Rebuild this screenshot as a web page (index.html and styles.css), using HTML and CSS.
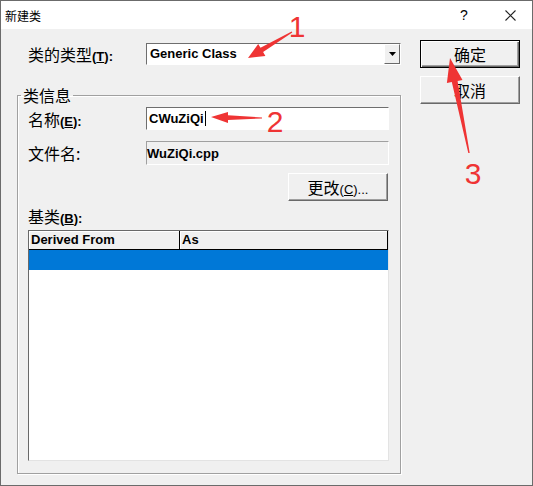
FILE: index.html
```html
<!DOCTYPE html>
<html lang="zh-CN">
<head>
    <meta charset="UTF-8">
    <meta name="viewport" content="width=device-width, initial-scale=1.0">
    <title>新建类</title>
    <link rel="stylesheet" href="styles.css">
</head>
<body>
    <div class="window">
        <div class="titlebar">
            <span class="title">新建类</span>
            <span class="help">?</span>
            <span class="close">
                <svg width="11" height="11" viewBox="0 0 11 11"><path d="M0.5 0.5 L10.5 10.5 M10.5 0.5 L0.5 10.5" stroke="#222" stroke-width="1.1" fill="none"/></svg>
            </span>
        </div>

        <div class="client">
            <div class="main">
                <div class="type-row">
                    <label class="lbl">类的类型<span class="key">(<u>T</u>):</span></label>
                    <div class="combo">
                        <span class="combo-text">Generic Class</span>
                        <span class="combo-btn">
                            <svg width="7" height="4" viewBox="0 0 7 4"><path d="M0 0 H7 L3.5 4 Z" fill="#000"/></svg>
                        </span>
                    </div>
                </div>

                <fieldset class="group">
                    <legend>类信息</legend>

                    <div class="field-row">
                        <label class="lbl">名称<span class="key">(<u>E</u>):</span></label>
                        <div class="edit">CWuZiQi<span class="caret"></span></div>
                    </div>

                    <div class="field-row file-row">
                        <span class="lbl">文件名:</span>
                        <div class="edit readonly">WuZiQi.cpp</div>
                    </div>

                    <div class="change-row">
                        <button class="btn change-btn">更改<span class="key-plain">(<u>C</u>)...</span></button>
                    </div>

                    <div class="base-label">基类<span class="key">(<u>B</u>):</span></div>

                    <div class="list">
                        <div class="list-head">
                            <div class="col col-from">Derived From</div>
                            <div class="col col-as">As</div>
                        </div>
                        <div class="list-row selected"></div>
                    </div>
                </fieldset>
            </div>

            <div class="side">
                <button class="btn default">确定</button>
                <button class="btn">取消</button>
            </div>
        </div>

        <!-- red annotations drawn over the dialog -->
        <svg class="marks" width="533" height="486" viewBox="0 0 533 486">
            <polygon points="248,58 265.4,55.9 263.1,52.1 292.3,32.4 291.7,31.6 260.5,47.7 258.2,43.9"/>
            <polygon points="211,117 228,112 228,115.3 262,117.5 262,118.5 228,120 228,123"/>
            <polygon points="450,58 462.5,79.9 457.6,80.9 469.7,152.9 468.3,153.1 451.8,82.1 446.9,83.1"/>
            <text x="297" y="37">1</text>
            <text x="275" y="132">2</text>
            <text x="473" y="184">3</text>
        </svg>
    </div>
</body>
</html>
```

FILE: styles.css
```css
body {
    margin: 0;
    background-color: #f0f0f0;
    font-family: "Noto Sans CJK SC", "Liberation Sans", sans-serif;
    color: #000;
}

.window {
    position: relative;
    width: 533px;
    height: 486px;
    box-sizing: border-box;
    border: 1px solid #6b6b6b;
    background-color: #f0f0f0;
}

.titlebar {
    display: flex;
    align-items: center;
    height: 28px;
    background-color: #fff;
    padding-left: 4px;
}

.title {
    font-size: 12px;
    flex: 1;
}

.help {
    font-family: "Liberation Sans", sans-serif;
    font-size: 14px;
    width: 14px;
    text-align: center;
    margin-right: 34px;
}

.close {
    display: flex;
    width: 11px;
    height: 11px;
    margin-right: 16px;
}

.client {
    display: flex;
    padding-left: 16px;
}

.main {
    width: 384px;
}

.side {
    display: flex;
    flex-direction: column;
    margin-left: 19px;
    padding-top: 11px;
}

/* labels */
.lbl {
    width: 118px;
    font-size: 16px;
    line-height: 20px;
    flex-shrink: 0;
}

.key {
    font-family: "Liberation Sans", sans-serif;
    font-size: 13px;
    font-weight: bold;
    line-height: 1;
}

.key-plain {
    font-family: "Liberation Sans", sans-serif;
    font-size: 13px;
    line-height: 1;
}

.type-row {
    display: flex;
    align-items: center;
    margin-top: 14px;
    height: 22px;
}

.type-row .lbl {
    margin-left: 11px;
}

.combo {
    display: flex;
    width: 255px;
    height: 22px;
    box-sizing: border-box;
    border: 1px solid;
    border-color: #6e6e6e #fff #fff #6e6e6e;
    background-color: #fff;
}

.combo-text {
    flex: 1;
    padding-left: 3px;
    font-family: "Liberation Sans", sans-serif;
    font-size: 13px;
    font-weight: bold;
    line-height: 20px;
}

.combo-btn {
    display: flex;
    align-items: center;
    justify-content: center;
    width: 16px;
    box-sizing: border-box;
    border: 1px solid;
    border-color: #fff #696969 #696969 #fff;
    background-color: #f0f0f0;
}

/* group box */
.group {
    margin: 20px 0 0 0;
    padding: 2px 11px 12px 10px;
    border: 1px solid #a0a0a0;
    box-shadow: 1px 1px 0 #fff, inset 1px 1px 0 #fff;
    min-width: 0;
}

.group legend {
    font-size: 16px;
    line-height: 20px;
    padding: 0 2px;
    margin-left: -7px;
}

.field-row {
    display: flex;
    align-items: center;
}

.edit {
    display: flex;
    align-items: center;
    width: 244px;
    height: 23px;
    box-sizing: border-box;
    border: 1px solid;
    border-color: #6e6e6e #fff #fff #6e6e6e;
    background-color: #fff;
    padding-left: 2px;
    font-family: "Liberation Sans", sans-serif;
    font-size: 13px;
    font-weight: bold;
}

.caret {
    display: inline-block;
    width: 1px;
    height: 15px;
    margin-left: 1px;
    background-color: #000;
}

.file-row {
    margin-top: 11px;
}

.edit.readonly {
    height: 24px;
    padding-left: 0;
    background-color: #f0f0f0;
    border-color: #a0a0a0 #fff #fff #a0a0a0;
}

.change-row {
    display: flex;
    justify-content: flex-end;
    margin-top: 8px;
    padding-right: 1px;
}

/* buttons */
.btn {
    width: 100px;
    height: 28px;
    box-sizing: border-box;
    border: 1px solid;
    border-color: #fff #696969 #696969 #fff;
    box-shadow: inset -1px -1px 0 #a0a0a0;
    background-color: #f0f0f0;
    font-family: "Noto Sans CJK SC", sans-serif;
    font-size: 16px;
    line-height: 20px;
    padding: 0;
    color: #000;
}

.side .btn + .btn {
    margin-top: 8px;
}

.btn.default {
    border-color: #000;
    box-shadow: inset 1px 1px 0 #fff, inset -1px -1px 0 #696969, inset -2px -2px 0 #a0a0a0;
}

.base-label {
    height: 20px;
    font-size: 16px;
    line-height: 20px;
    margin-top: 5px;
}

/* base class list */
.list {
    margin-top: 4px;
    height: 231px;
    box-sizing: border-box;
    border: 1px solid;
    border-color: #696969 #e3e3e3 #e3e3e3 #696969;
    background-color: #fff;
}

.list-head {
    display: flex;
    height: 19px;
    box-sizing: border-box;
    border-bottom: 1px solid #000;
    background-color: #f0f0f0;
    font-family: "Liberation Sans", sans-serif;
    font-size: 13px;
    font-weight: bold;
}

.col {
    padding-left: 2px;
    line-height: 18px;
    box-sizing: border-box;
    border-right: 1px solid #000;
    box-shadow: inset 1px 1px 0 #fff;
}

.col-from {
    width: 151px;
}

.col-as {
    flex: 1;
}

.list-row {
    height: 20px;
}

.selected {
    background-color: #0078d7;
}

/* annotations */
.marks {
    position: absolute;
    top: -1px;
    left: -1px;
    pointer-events: none;
    fill: #ef3434;
}

.marks text {
    font-family: "Liberation Sans", sans-serif;
    font-size: 30px;
    text-anchor: middle;
}
```
